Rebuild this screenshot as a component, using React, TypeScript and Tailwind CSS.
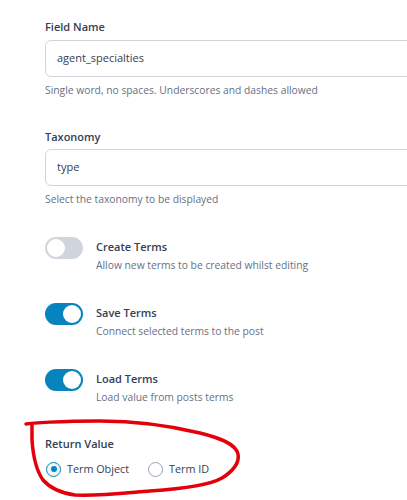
import React from "react";

const font = { fontFamily: '"Open Sans", "Noto Sans", sans-serif' };

function Toggle({ on }: { on: boolean }) {
  return (
    <div
      className={
        "relative w-[38px] h-[22px] rounded-full shrink-0 " +
        (on ? "bg-[#0783be]" : "bg-[#d0d5dd]")
      }
    >
      <div
        className={
          "absolute top-[2px] w-[18px] h-[18px] rounded-full bg-white " +
          (on ? "left-[18px]" : "left-[2px]")
        }
      />
    </div>
  );
}

function ToggleRow({ on, title, desc }: { on: boolean; title: string; desc: string }) {
  return (
    <div className="flex gap-[13px]">
      <Toggle on={on} />
      <div className="flex flex-col">
        <div className="text-[11px] leading-[20px] font-semibold text-[#344054]">{title}</div>
        <div className="text-[10.3px] leading-[18px] text-[#667085] mt-[-1px]">{desc}</div>
      </div>
    </div>
  );
}

export default function App() {
  return (
    <div
      className="relative w-[407px] h-[500px] overflow-hidden bg-white"
      style={font}
    >
      <div className="pl-[45px] pt-[17px] flex flex-col w-[460px]">
        <div className="text-[11px] leading-[20px] font-semibold text-[#344054]">Field Name</div>
        <div className="mt-[3px] h-[37px] w-[400px] rounded-[6px] border border-[#d0d5dd] flex items-center px-[11px] text-[11px] text-[#344054]">
          agent_specialties
        </div>
        <div className="mt-[3px] text-[10.3px] leading-[20px] text-[#667085]">
          Single word, no spaces. Underscores and dashes allowed
        </div>

        <div className="mt-[27px] text-[11px] leading-[20px] font-semibold text-[#344054]">Taxonomy</div>
        <div className="mt-[2px] h-[37px] w-[400px] rounded-[6px] border border-[#d0d5dd] flex items-center px-[11px] text-[11px] text-[#344054]">
          type
        </div>
        <div className="mt-[3px] text-[10.3px] leading-[20px] text-[#667085]">
          Select the taxonomy to be displayed
        </div>

        <div className="mt-[28px] flex flex-col gap-[29px]">
          <ToggleRow on={false} title="Create Terms" desc="Allow new terms to be created whilst editing" />
          <ToggleRow on={true} title="Save Terms" desc="Connect selected terms to the post" />
          <ToggleRow on={true} title="Load Terms" desc="Load value from posts terms" />
        </div>

        <div className="mt-[28px] text-[11px] leading-[20px] font-semibold text-[#344054]">Return Value</div>
        <div className="mt-[5px] flex items-center text-[10.8px] leading-[20px] text-[#344054]">
          <div className="ml-[1px] w-[15px] h-[15px] rounded-full border border-[#0783be] bg-[#ebf5fa] flex items-center justify-center">
            <div className="w-[6px] h-[6px] rounded-full bg-[#0783be]" />
          </div>
          <span className="ml-[6px]">Term Object</span>
          <div className="ml-[19px] w-[15px] h-[15px] rounded-full border border-[#98a2b3] bg-white" />
          <span className="ml-[6px]">Term ID</span>
        </div>
      </div>

      <svg
        className="absolute left-0 top-0 pointer-events-none"
        width="407"
        height="500"
        viewBox="0 0 407 500"
      >
        <path
          d="M26 424 C 31 423, 60 421, 100 421 C 140 421, 175 427, 200 433 C 220 438, 236 444, 238 454 C 240 463, 232 472, 222 478 C 210 485, 180 489, 150 491 C 125 493, 100 496, 75 495 C 60 493, 50 488, 43 480 C 36 470, 33 455, 32 440 C 32 432, 32 427, 32 424"
          fill="none"
          stroke="#e3000b"
          strokeWidth="3.5"
          strokeLinecap="round"
          strokeLinejoin="round"
        />
      </svg>
    </div>
  );
}
